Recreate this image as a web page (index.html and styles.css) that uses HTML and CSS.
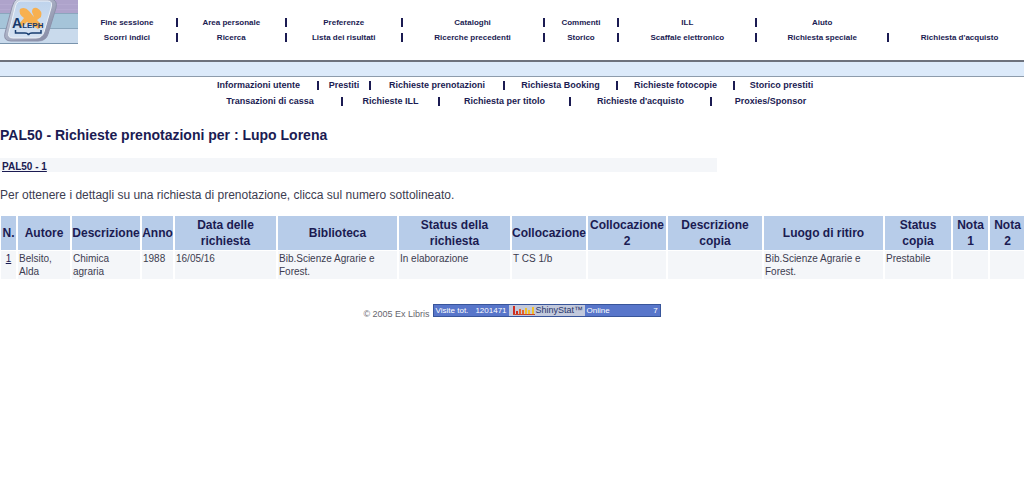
FILE: index.html
```html
<!DOCTYPE html>
<html lang="it">
<head>
<meta charset="utf-8">
<title>Richieste prenotazioni</title>
<link rel="stylesheet" href="styles.css">
</head>
<body>
<header class="top">
  <svg class="logo" viewBox="0 0 78 45" role="img" aria-label="Aleph">
    <defs>
      <linearGradient id="rim" x1="0" y1="0" x2="1" y2="1"><stop offset="0" stop-color="#dce3ee"/><stop offset=".5" stop-color="#a5abc0"/><stop offset="1" stop-color="#8085a0"/></linearGradient>
      <linearGradient id="face" x1="0" y1="0" x2="0" y2="1"><stop offset="0" stop-color="#bed3ec"/><stop offset="1" stop-color="#d5e2f2"/></linearGradient>
    </defs>
    <rect width="78" height="14" fill="#aea3cb"/>
    <rect y="14" width="78" height="14" fill="#a5c4d9"/>
    <rect y="28" width="78" height="15" fill="#c9daec"/>
    <path d="M0 4.500H78M0 9.500H78" stroke="#b4a9d0"/>
    <path d="M0 13.500H78M0 28.500H78" stroke="#8aa6bd"/>
    <path d="M0 43.500H78" stroke="#7893ac"/>
    <path d="M17 -1H51Q58 0 56 8L48 34Q46 41 38 41H11Q3 41 5 33L12 7Q14 0 17 -1Z" fill="url(#rim)" stroke="#8d91aa"/>
    <path d="M20 1H48Q53 1 51 8L44 32Q42 38 36 38H13Q7 38 9 32L15 8Q16 2 20 1Z" fill="url(#face)" stroke="#edf2f8"/>
    <path d="M20 9Q25 6 29 11L34 17L32 12Q32 7 37 8Q43 11 41 17L37 20L43 26L38 29L27 22L22 27L19 24L24 18Q18 14 20 9Z" fill="#f7b050"/>
    <text x="12" y="28" class="logo-text">A<tspan class="logo-small">LEPH</tspan></text>
    <path d="M15.500 30V33H25Q28 33 28.500 35Q29 33 32 33H41V30" fill="none" stroke="#173d70" stroke-width="1.500"/>
  </svg>
  <nav class="main-nav">
    <a href="#">Fine sessione</a><i class="sep"></i><a href="#">Area personale</a><i class="sep"></i><a href="#">Preferenze</a><i class="sep"></i><a href="#">Cataloghi</a><i class="sep"></i><a href="#">Commenti</a><i class="sep"></i><a href="#">ILL</a><i class="sep"></i><a href="#">Aiuto</a><i></i><i></i>
    <a href="#">Scorri indici</a><i class="sep"></i><a href="#">Ricerca</a><i class="sep"></i><a href="#">Lista dei risultati</a><i class="sep"></i><a href="#">Ricerche precedenti</a><i class="sep"></i><a href="#">Storico</a><i class="sep"></i><a href="#">Scaffale elettronico</a><i class="sep"></i><a href="#">Richiesta speciale</a><i class="sep"></i><a href="#">Richiesta d'acquisto</a>
  </nav>
</header>
<div class="band"></div>
<nav class="user-nav">
  <div class="row row-one">
    <a href="#">Informazioni utente</a><i class="sep"></i><a href="#">Prestiti</a><i class="sep"></i><a href="#">Richieste prenotazioni</a><i class="sep"></i><a href="#">Richiesta Booking</a><i class="sep"></i><a href="#">Richieste fotocopie</a><i class="sep"></i><a href="#">Storico prestiti</a>
  </div>
  <div class="row row-two">
    <a href="#">Transazioni di cassa</a><i class="sep"></i><a href="#">Richieste ILL</a><i class="sep"></i><a href="#">Richiesta per titolo</a><i class="sep"></i><a href="#">Richieste d'acquisto</a><i class="sep"></i><a href="#">Proxies/Sponsor</a>
  </div>
</nav>
<main>
  <h1>PAL50 - Richieste prenotazioni per : Lupo Lorena</h1>
  <div class="library"><a href="#">PAL50 - 1</a></div>
  <p class="hint">Per ottenere i dettagli su una richiesta di prenotazione, clicca sul numero sottolineato.</p>
  <table>
    <colgroup><col class="c-n"><col class="c-author"><col class="c-desc"><col class="c-year"><col class="c-date"><col class="c-lib"><col class="c-status"><col class="c-coll"><col class="c-coll2"><col class="c-copy"><col class="c-lib"><col class="c-cstatus"><col class="c-note"><col class="c-note"></colgroup>
    <thead>
      <tr><th>N.</th><th>Autore</th><th>Descrizione</th><th>Anno</th><th>Data delle richiesta</th><th>Biblioteca</th><th>Status della richiesta</th><th>Collocazione</th><th>Collocazione 2</th><th>Descrizione copia</th><th>Luogo di ritiro</th><th>Status copia</th><th>Nota 1</th><th>Nota 2</th></tr>
    </thead>
    <tbody>
      <tr><td class="num"><a href="#">1</a></td><td>Belsito, Alda</td><td>Chimica agraria</td><td>1988</td><td>16/05/16</td><td>Bib.Scienze Agrarie e Forest.</td><td>In elaborazione</td><td>T CS 1/b</td><td></td><td></td><td>Bib.Scienze Agrarie e Forest.</td><td>Prestabile</td><td></td><td></td></tr>
    </tbody>
  </table>
</main>
<footer>
  <span class="copyright">© 2005 Ex Libris</span>
  <a class="counter" href="#">
    <span class="cell"><span>Visite tot.</span><span>1201471</span></span>
    <span class="brand"><svg class="bars" viewBox="0 0 22 9" aria-hidden="true"><path d="M1 0V8M4 5V8" stroke="#d02b20" stroke-width="2"/><path d="M7 3V8M10 4V8" stroke="#e8642a" stroke-width="2"/><path d="M13 2V8M16 4V8M20 1V8" stroke="#f2bf28" stroke-width="2"/><path d="M0 8.500H22" stroke="#c8452a"/></svg><span>ShinyStat™</span></span>
    <span class="cell"><span>Online</span><span>7</span></span>
  </a>
</footer>
</body>
</html>
```
FILE: styles.css
```css
* { box-sizing: border-box; }
body {
  margin: 0;
  background: #fff;
  color: #3c3c50;
  font-family: "Liberation Sans", Arial, sans-serif;
  font-size: 12px;
  overflow-x: hidden;
}
a { color: #1b1b52; text-decoration: none; }
.top { display: flex; align-items: flex-start; height: 60px; }
.logo { flex: none; width: 78px; height: 45px; }
.logo-text { font: bold 14px "Liberation Sans", Arial, sans-serif; fill: #17396b; }
.logo-small { font-size: 8px; }
.main-nav {
  flex: 1;
  display: grid;
  grid-template-columns: 98fr 2px 107fr 2px 114fr 2px 140fr 2px 73fr 2px 136fr 2px 130fr 2px 135fr;
  grid-auto-rows: 15px;
  align-items: center;
  padding-top: 15px;
  font-size: 8px;
  font-weight: bold;
  text-align: center;
  white-space: nowrap;
}
.main-nav a:last-child { padding-left: 6px; }
.sep { width: 2px; height: 9px; background: #1b1b52; }
.band { height: 17px; background: #dceafa; border-top: 2px solid #6d727d; border-bottom: 1px solid #8d9cac; }
.user-nav { padding-left: 4px; font-size: 9px; font-weight: bold; text-align: center; white-space: nowrap; }
.row { display: grid; justify-content: center; align-items: center; height: 16px; }
.row-one { grid-template-columns: 117px 2px 50px 2px 132px 2px 111px 2px 115px 2px 93px; }
.row-two { grid-template-columns: 142px 2px 95px 2px 129px 2px 139px 2px 117px; }
h1 { margin: 17px 0 0; color: #1b1b52; font-size: 14px; line-height: 18px; }
.library { width: 70%; margin-top: 14px; padding: 3px 0 0 2px; background: #f4f6f9; font-size: 10px; font-weight: bold; line-height: 11px; }
.library a, .num a { text-decoration: underline; }
.hint { margin: 15px 0 12px; line-height: 16px; }
table { width: 100%; margin-left: -1px; table-layout: fixed; border-collapse: separate; border-spacing: 2px 1px; }
th { height: 34px; padding: 1px 0; background: #b7cce9; color: #1b1b52; font-size: 12px; line-height: 16px; }
td { height: 28px; padding: 1px; background: #f4f6f9; font-size: 10px; line-height: 13px; vertical-align: top; }
.num { text-align: center; }
.c-n { width: 15px; }
.c-author { width: 52px; }
.c-desc { width: 68px; }
.c-year { width: 31px; }
.c-date { width: 101px; }
.c-lib { width: 119px; }
.c-status { width: 111px; }
.c-coll { width: 74px; }
.c-coll2 { width: 78px; }
.c-copy { width: 94px; }
.c-cstatus { width: 66px; }
.c-note { width: 35px; }
footer { display: flex; justify-content: center; gap: 3px; margin-top: 24px; color: #66666e; font-size: 9px; }
.copyright { padding-top: 5px; }
.counter { display: flex; align-items: stretch; width: 228px; height: 13px; border: 1px solid #38559a; font-size: 8px; line-height: 11px; }
.cell { display: flex; justify-content: space-between; flex: 1; padding: 0 2px; background: #5876ca; color: #fff; }
.brand { display: flex; align-items: center; gap: 1px; width: 76px; padding-left: 4px; background: #c2c9dc; color: #29356a; font-size: 9px; }
.bars { flex: none; width: 22px; height: 9px; }
```
